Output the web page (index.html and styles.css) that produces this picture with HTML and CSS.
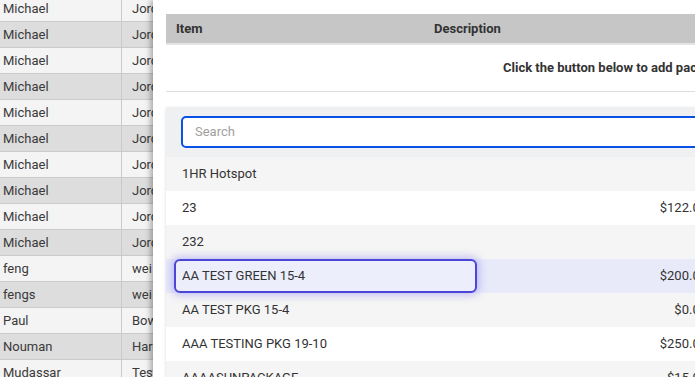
FILE: index.html
```html
<!DOCTYPE html>
<html lang="en">
<head>
    <meta charset="UTF-8">
    <meta name="viewport" content="width=device-width, initial-scale=1.0">
    <title>Packages</title>
    <link rel="stylesheet" href="styles.css">
</head>
<body>

    <div class="customers">
        <div class="customer-row"><div class="cell first">Michael</div><div class="cell">Jordan</div></div>
        <div class="customer-row"><div class="cell first">Michael</div><div class="cell">Jordan</div></div>
        <div class="customer-row"><div class="cell first">Michael</div><div class="cell">Jordan</div></div>
        <div class="customer-row"><div class="cell first">Michael</div><div class="cell">Jordan</div></div>
        <div class="customer-row"><div class="cell first">Michael</div><div class="cell">Jordan</div></div>
        <div class="customer-row"><div class="cell first">Michael</div><div class="cell">Jordan</div></div>
        <div class="customer-row"><div class="cell first">Michael</div><div class="cell">Jordan</div></div>
        <div class="customer-row"><div class="cell first">Michael</div><div class="cell">Jordan</div></div>
        <div class="customer-row"><div class="cell first">Michael</div><div class="cell">Jordan</div></div>
        <div class="customer-row"><div class="cell first">Michael</div><div class="cell">Jordan</div></div>
        <div class="customer-row"><div class="cell first">feng</div><div class="cell">wei</div></div>
        <div class="customer-row"><div class="cell first">fengs</div><div class="cell">wei</div></div>
        <div class="customer-row"><div class="cell first">Paul</div><div class="cell">Bowman</div></div>
        <div class="customer-row"><div class="cell first">Nouman</div><div class="cell">Haroon</div></div>
        <div class="customer-row"><div class="cell first">Mudassar</div><div class="cell">Test</div></div>
    </div>

    <div class="drawer">
        <div class="table-head">
            <div class="col-item">Item</div>
            <div class="col-desc">Description</div>
        </div>
        <div class="empty-row">Click the button below to add packages.</div>

        <div class="dropdown">
            <div class="search-wrap">
                <input class="search" type="text" placeholder="Search">
            </div>
            <div class="options">
                <div class="option"><span class="name">1HR Hotspot</span><span class="price"></span></div>
                <div class="option"><span class="name">23</span><span class="price">$122.00</span></div>
                <div class="option"><span class="name">232</span><span class="price"></span></div>
                <div class="option active"><span class="name">AA TEST GREEN 15-4</span><span class="price">$200.00</span></div>
                <div class="option"><span class="name">AA TEST PKG 15-4</span><span class="price">$0.00</span></div>
                <div class="option"><span class="name">AAA TESTING PKG 19-10</span><span class="price">$250.00</span></div>
                <div class="option"><span class="name">AAAASUNPACKAGE</span><span class="price">$15.00</span></div>
            </div>
        </div>
    </div>

</body>
</html>
```

FILE: styles.css
```css
body {
    margin: 0;
    padding: 0;
    font-family: Roboto, sans-serif;
    font-size: 13px;
    color: #333333;
    overflow: hidden;
    display: flex;
    height: 377px;
    background: #ffffff;
}

.customers {
    flex: none;
    width: 153px;
    margin-top: -4px;
    overflow: hidden;
}

.customer-row {
    display: flex;
    height: 26px;
    box-sizing: border-box;
    border-bottom: 1px solid #cacaca;
    background: #f4f4f4;
    color: #3a3a3a;
}

.customer-row:nth-child(even) {
    background: #dddddd;
}

.cell {
    flex: none;
    display: flex;
    align-items: center;
    padding-left: 10px;
    padding-bottom: 1px;
    white-space: nowrap;
}

.cell.first {
    width: 122px;
    padding-left: 3px;
    box-sizing: border-box;
    border-right: 1px solid #cacaca;
}

.drawer {
    flex: none;
    width: 557px;
    padding: 14px 13px 0;
    background: #ffffff;
    box-shadow: -2px 0 6px rgba(0, 0, 0, 0.35);
    position: relative;
}

.table-head {
    display: flex;
    height: 28px;
    padding-bottom: 1px;
    align-items: center;
    background: #c6c6c6;
    border-bottom: 2px solid #e4e4e4;
    font-weight: bold;
    color: #333333;
}

.col-item {
    width: 258px;
    padding-left: 10px;
}

.empty-row {
    height: 45px;
    padding-bottom: 1px;
    display: flex;
    align-items: center;
    padding-left: 337px;
    font-weight: bold;
    border-bottom: 1px solid #dddddd;
    white-space: nowrap;
}

.dropdown {
    margin-top: 15px;
    background: #eff0f2;
    box-shadow: 0 1px 3px rgba(0, 0, 0, 0.15);
}

.search-wrap {
    padding: 9px 0 9px 15px;
}

.search {
    display: block;
    width: 560px;
    height: 32px;
    box-sizing: border-box;
    border: 2px solid #0a52e6;
    border-radius: 5px;
    padding: 0 12px 1px;
    font-family: Roboto, sans-serif;
    font-size: 13px;
    color: #333333;
    outline: none;
}

.search::placeholder {
    color: #a0a0a0;
}

.option {
    display: flex;
    align-items: center;
    justify-content: space-between;
    height: 34px;
    box-sizing: border-box;
    padding: 0 16px 1px;
    background: #f5f5f5;
    white-space: nowrap;
}

.option:nth-child(even) {
    background: #ffffff;
}

.option .name {
    flex: none;
}

.option.active {
    background: #e8eaf9;
    padding-bottom: 0;
}

.option.active .name {
    width: 303px;
    height: 34px;
    box-sizing: border-box;
    margin-left: -8px;
    padding: 0 6px 1px;
    display: flex;
    align-items: center;
    border: 2px solid #4d44d8;
    border-radius: 6px;
    background: #eceefc;
    box-shadow: 0 0 8px 2px rgba(92, 82, 232, 0.35);
}

.option.active .price {
    padding-bottom: 1px;
}
```
